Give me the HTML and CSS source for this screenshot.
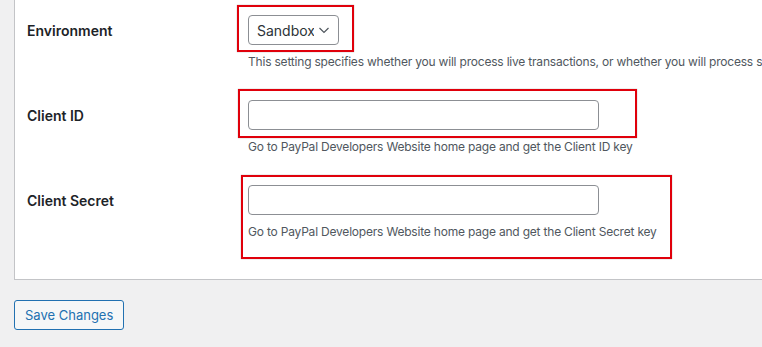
FILE: index.html
```
<!DOCTYPE html>
<html lang="en">
<head>
  <meta charset="UTF-8">
  <title>PayPal Settings</title>
  <link rel="stylesheet" href="styles.css">
</head>
<body>
  <form id="settingsForm">
    <div class="panel">

      <div class="row">
        <label class="row-label" for="environment">Environment</label>
        <div class="row-field">
          <span class="mark mark-env">
            <select id="environment" name="environment">
              <option>Sandbox</option>
              <option>Live</option>
            </select>
          </span>
          <p class="description nowrap">This setting specifies whether you will process live transactions, or whether you will process simulated transactions using the PayPal Sandbox.</p>
        </div>
      </div>

      <div class="row">
        <label class="row-label" for="clientId">Client ID</label>
        <div class="row-field">
          <span class="mark mark-id">
            <input type="text" id="clientId" name="client_id">
          </span>
          <p class="description">Go to PayPal Developers Website home page and get the Client ID key</p>
        </div>
      </div>

      <div class="row">
        <label class="row-label" for="clientSecret">Client Secret</label>
        <div class="row-field">
          <div class="mark mark-secret">
            <input type="text" id="clientSecret" name="client_secret">
            <p class="description">Go to PayPal Developers Website home page and get the Client Secret key</p>
          </div>
        </div>
      </div>

    </div>

    <button type="submit" class="button">Save Changes</button>
  </form>
</body>
</html>
```

FILE: styles.css
```
body {
  margin: 0;
  background-color: #f0f0f1;
  font-family: Inter, "Noto Sans", sans-serif;
  color: #1d2327;
  overflow: hidden;
}
form {
  padding-left: 14px;
}
.panel {
  background: #fff;
  border-left: 1px solid #c3c4c7;
  border-bottom: 1px solid #c3c4c7;
  padding: 0 0 24px 12px;
  width: 900px;
}
.row {
  display: flex;
  padding: 15px 0 13px;
}
.row-label {
  width: 221px;
  flex: none;
  padding-top: 6px;
  font-size: 14px;
  font-weight: 600;
  line-height: 20px;
}
.row-field {
  flex: 1;
}
.description {
  margin: 7px 0 0;
  font-size: 12px;
  letter-spacing: -0.2px;
  line-height: 20px;
  color: #50575e;
}
.nowrap {
  white-space: nowrap;
}

/* red annotation frames */
.mark {
  position: relative;
  display: inline-block;
  vertical-align: top;
}
.mark::after {
  content: "";
  position: absolute;
  border: 2px solid #e0000b;
  box-shadow: 0 0 1px rgba(0,0,0,0.4);
  pointer-events: none;
}
.mark-env::after {
  left: -11px;
  top: -10px;
  right: -15px;
  bottom: -7px;
}
.mark-id::after {
  left: -10px;
  top: -11px;
  right: -38px;
  bottom: -8px;
}
.mark-secret {
  display: block;
}
.mark-secret::after {
  left: -7px;
  top: -10px;
  width: 431px;
  bottom: -17px;
  box-sizing: border-box;
}

select, input {
  box-sizing: border-box;
  height: 30px;
  border: 1px solid #8c8f94;
  border-radius: 4px;
  background-color: #fff;
  font-family: inherit;
  color: #2c3338;
  margin: 0;
  display: block;
}
select {
  appearance: none;
  -webkit-appearance: none;
  width: 91px;
  padding: 0 24px 0 8px;
  font-size: 14px;
  background-image: url("data:image/svg+xml;utf8,<svg xmlns='http://www.w3.org/2000/svg' width='12' height='8' viewBox='0 0 12 8'><path d='M1.5 2 L6 6.5 L10.5 2' fill='none' stroke='%2350575e' stroke-width='1.2'/></svg>");
  background-repeat: no-repeat;
  background-position: right 8px center;
}
input {
  width: 351px;
  padding: 0 8px;
  font-size: 14px;
}
.button {
  margin-top: 20px;
  height: 30px;
  padding: 0 10px;
  background: #f6f7f7;
  border: 1px solid #2271b1;
  border-radius: 3px;
  color: #2271b1;
  font-family: inherit;
  font-size: 13px;
  cursor: pointer;
}
.button:hover {
  background: #f0f0f1;
  color: #135e96;
}
```
